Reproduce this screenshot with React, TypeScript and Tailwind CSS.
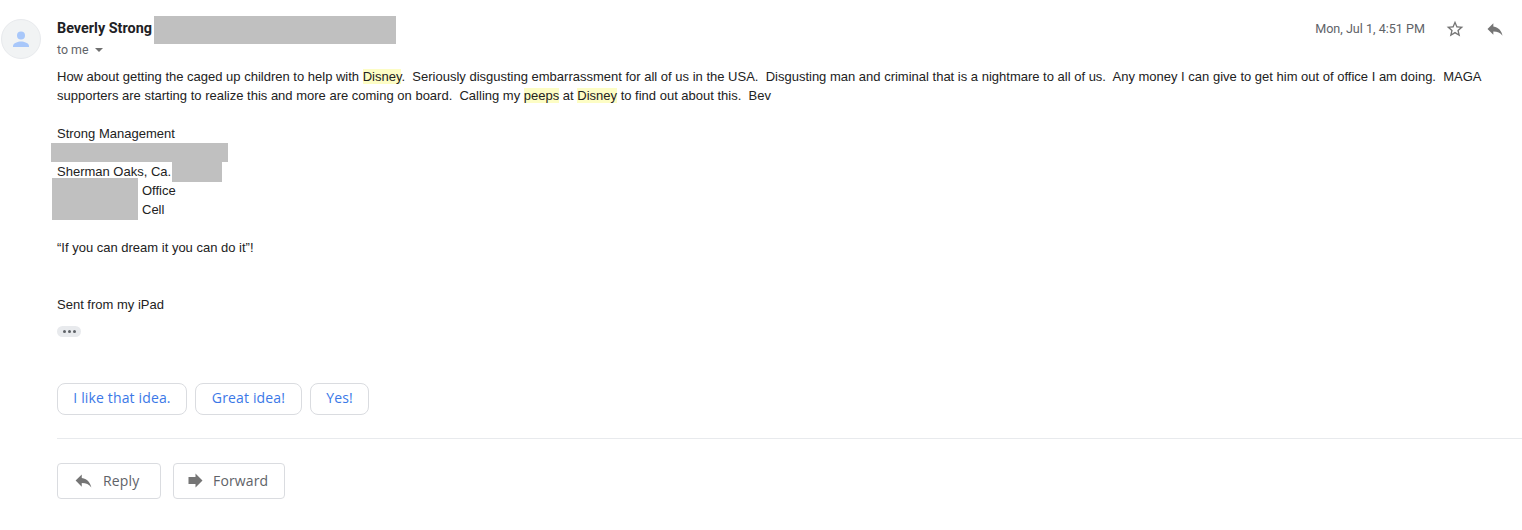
import React from 'react';

const ReplyIcon = ({ className }: { className: string }) => (
    <svg viewBox="0 0 24 24" className={className} fill="currentColor">
        <path d="M10 9V5l-7 7 7 7v-4.1c5 0 8.5 1.6 11 5.1-1-5-4-10-11-11z" />
    </svg>
);

const ForwardIcon = ({ className }: { className: string }) => (
    <svg viewBox="0 0 24 24" className={className} fill="currentColor">
        <path d="M12 8V4l8 8-8 8v-4H4V8z" />
    </svg>
);

const StarIcon = ({ className }: { className: string }) => (
    <svg viewBox="0 0 24 24" className={className} fill="currentColor">
        <path d="M22 9.24l-7.19-.62L12 2 9.19 8.63 2 9.24l5.46 4.73L5.82 21 12 17.27 18.18 21l-1.63-7.03L22 9.24zM12 15.4l-3.76 2.27 1-4.28-3.32-2.88 4.38-.38L12 6.1l1.71 4.04 4.38.38-3.32 2.88 1 4.28L12 15.4z" />
    </svg>
);

const Mark = ({ children }: { children: React.ReactNode }) => (
    <span className="bg-[#fdfdc5]">{children}</span>
);

const App: React.FC = () => {
    return (
        <div className="relative h-[530px] w-[1522px] overflow-hidden bg-white font-['Roboto',sans-serif]">
            {/* Header */}
            <div className="flex h-[67px] items-start">
                <div className="ml-px mt-[19px] flex h-10 w-10 items-center justify-center rounded-full border border-[#e8eaed] bg-[#f1f3f4]">
                    <svg viewBox="0 0 24 24" className="h-6 w-6 text-[#a8c7fa]" fill="currentColor">
                        <circle cx="12" cy="8.5" r="4" />
                        <path d="M4 19c0-3 5-4.5 8-4.5s8 1.500 8 4.500v1H4z" />
                    </svg>
                </div>
                <div className="ml-4 mt-[19px] flex-1">
                    <div className="text-[14.4px] font-bold leading-[19px] text-[#202124]">Beverly Strong</div>
                    <div className="mt-[2px] flex items-center text-[12.4px] leading-[20px] text-[#5f6368]">
                        to me
                        <span className="ml-[6px] h-0 w-0 border-x-[4px] border-t-[4px] border-x-transparent border-t-[#707070]" />
                    </div>
                </div>
                <div className="mr-[17px] mt-[19px] flex items-center text-[#5f6368]">
                    <span className="text-[12.6px] leading-5">Mon, Jul 1, 4:51 PM</span>
                    <StarIcon className="ml-[20px] h-5 w-5 text-[#757575]" />
                    <ReplyIcon className="ml-[20px] h-5 w-5 text-[#757575]" />
                </div>
            </div>

            {/* Body */}
            <div className="ml-[57px] mr-[30px] font-['Liberation_Sans',Arial,sans-serif] text-[13px] leading-[19px] text-[#222222]">
                <p>
                    How about getting the caged up children to help with <Mark>Disney</Mark>.&nbsp; Seriously disgusting embarrassment for all of us in the USA.&nbsp; Disgusting man and criminal that is a nightmare to all of us.&nbsp; Any money I can give to get him out of office I am doing.&nbsp; MAGA supporters are starting to realize this and more are coming on board.&nbsp; Calling my <Mark>peeps</Mark> at <Mark>Disney</Mark> to find out about this.&nbsp; Bev
                </p>
                <p className="mt-[19px]">Strong Management</p>
                <p className="h-[19px]" />
                <p>Sherman Oaks, Ca.</p>
                <p className="pl-[85px]">Office</p>
                <p className="pl-[85px]">Cell</p>
                <p className="mt-[19px]">“If you can dream it you can do it”!</p>
                <p className="mt-[38px]">Sent from my iPad</p>
                <div className="mt-[12px] flex h-[11px] w-6 items-center justify-center gap-[2px] rounded-full bg-[#e8eaed]">
                    <span className="h-[3px] w-[3px] rounded-full bg-[#5f6368]" />
                    <span className="h-[3px] w-[3px] rounded-full bg-[#5f6368]" />
                    <span className="h-[3px] w-[3px] rounded-full bg-[#5f6368]" />
                </div>
            </div>

            {/* Smart replies */}
            <div className="ml-[57px] mt-[46px] flex gap-2 font-['Open_Sans',sans-serif] text-sm font-medium tracking-[0.15px] text-[#3b78e7]">
                <button className="h-8 w-[130px] rounded-lg border border-[#dadce0] pb-[2px]">I like that idea.</button>
                <button className="h-8 w-[107px] rounded-lg border border-[#dadce0] pb-[2px]">Great idea!</button>
                <button className="h-8 w-[59px] rounded-lg border border-[#dadce0] pb-[2px]">Yes!</button>
            </div>

            <div className="ml-[57px] mt-[23px] border-t border-[#e8eaed]" />

            {/* Actions */}
            <div className="ml-[57px] mt-6 flex gap-3 font-['Open_Sans',sans-serif] text-sm font-medium tracking-[0.15px] text-[#5f6368]">
                <button className="flex h-9 w-[104px] items-center rounded border border-[#dadce0] pb-[1px] pl-[15px]">
                    <ReplyIcon className="h-[21px] w-[21px] text-[#757575]" />
                    <span className="ml-[9px]">Reply</span>
                </button>
                <button className="flex h-9 w-[112px] items-center rounded border border-[#dadce0] pb-[1px] pl-[11px]">
                    <ForwardIcon className="h-[21px] w-[21px] text-[#757575]" />
                    <span className="ml-[7px]">Forward</span>
                </button>
            </div>

            {/* Redactions */}
            <div className="absolute left-[154px] top-4 h-7 w-[242px] bg-[#c0c0c0]" />
            <div className="absolute left-[51px] top-[143px] h-[19px] w-[177px] bg-[#c0c0c0]" />
            <div className="absolute left-[172px] top-[162px] h-5 w-[50px] bg-[#c0c0c0]" />
            <div className="absolute left-[52px] top-[178px] h-[42px] w-[86px] bg-[#c0c0c0]" />
        </div>
    );
};

export default App;
